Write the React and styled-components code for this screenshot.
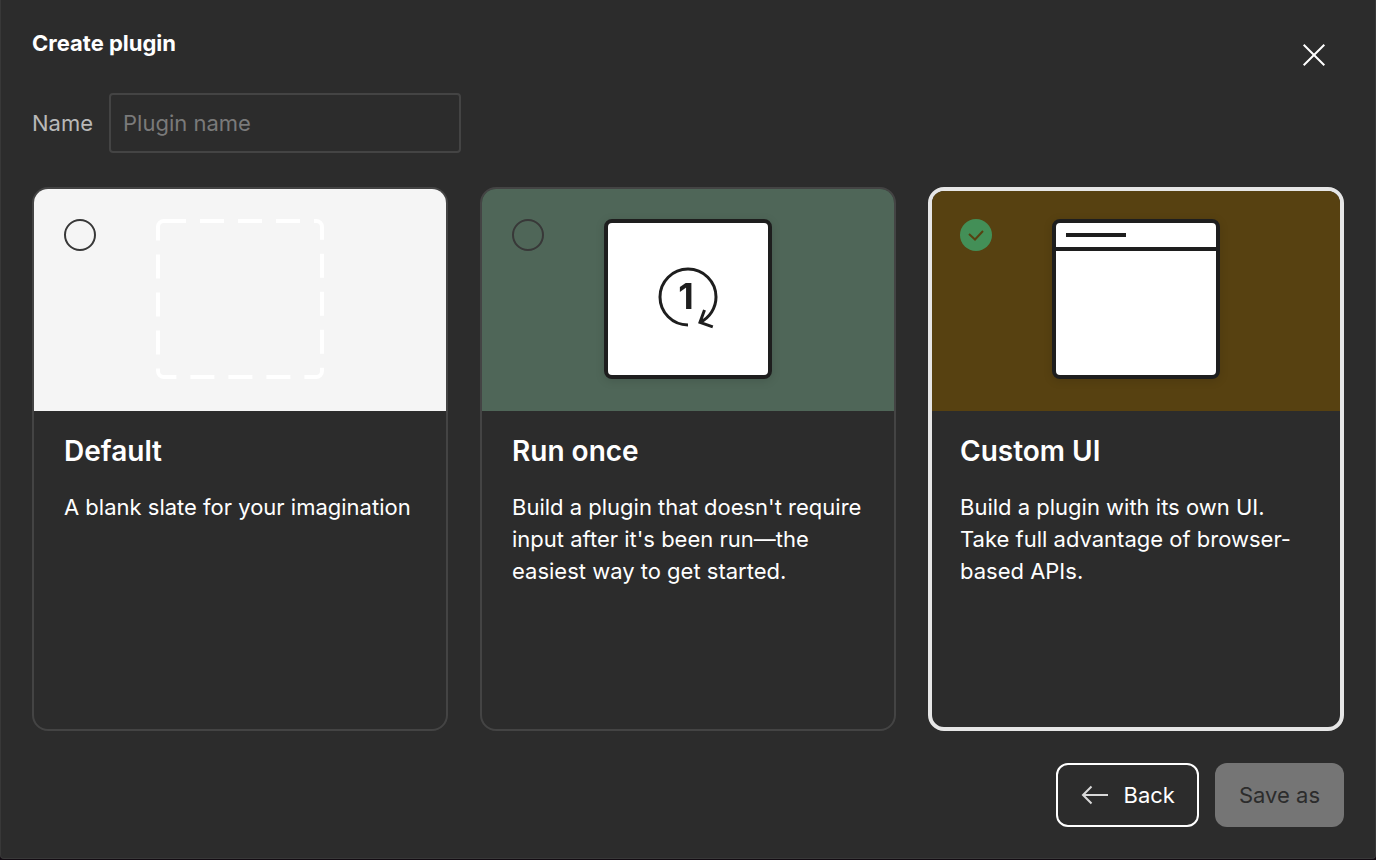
import React, { useState } from "react";
import styled, { createGlobalStyle } from "styled-components";

const GlobalStyle = createGlobalStyle`
  * { box-sizing: border-box; }
  html { background: #120b12; }
  body {
    margin: 0;
    color: #ffffff;
    font-family: Inter, "Liberation Sans", sans-serif;
    font-size: 22px;
    line-height: 32px;
    -webkit-font-smoothing: antialiased;
  }
  h1, h2, p { margin: 0; }
  button, input { font: inherit; }
`;

const Dialog = styled.form`
  display: flex;
  flex-direction: column;
  min-height: calc(100vh - 1px);
  background: #2c2c2c;
  border: 1px solid #383838;
  border-top: 0;
  border-radius: 0 0 4px 4px;
  padding: 23px 31px 31px;
`;

const Header = styled.header`
  display: flex;
  justify-content: space-between;
  align-items: flex-start;
`;

const Title = styled.h1`
  font-size: 22px;
  font-weight: 700;
  line-height: 40px;
`;

const CloseButton = styled.button`
  display: grid;
  place-items: center;
  width: 60px;
  height: 64px;
  padding: 0;
  border: 0;
  background: none;
  color: #ffffff;
  cursor: pointer;
`;

const NameRow = styled.div`
  display: flex;
  align-items: center;
  gap: 16px;
  margin-top: 6px;
`;

const NameLabel = styled.label`
  color: #b9b9b9;
`;

const NameInput = styled.input`
  width: 352px;
  height: 60px;
  padding: 0 12px;
  border: 2px solid #444444;
  border-radius: 4px;
  background: transparent;
  color: #ffffff;
  outline: none;
  &::placeholder { color: #7a7a7a; opacity: 1; }
`;

const Cards = styled.div`
  display: grid;
  grid-template-columns: repeat(3, minmax(0, 1fr));
  gap: 32px;
  flex: 1;
  margin: 34px 0 32px;
`;

const Card = styled.label`
  --edge: ${(p) => (p.$selected ? "4px" : "2px")};
  display: flex;
  flex-direction: column;
  border: var(--edge) solid ${(p) => (p.$selected ? "#e6e6e6" : "#444444")};
  border-radius: 16px;
  overflow: hidden;
  cursor: pointer;
`;

const Preview = styled.div`
  display: grid;
  grid-template-columns: 1fr auto 1fr;
  align-items: start;
  height: calc(224px - var(--edge));
  padding: calc(32px - var(--edge));
  padding-bottom: 0;
  background: ${(p) => p.$color};
`;

const RadioWrap = styled.span`
  display: grid;
  width: 32px;
  height: 32px;
  & > * { grid-area: 1 / 1; }
  & > svg { pointer-events: none; }
`;

const Radio = styled.input`
  appearance: none;
  width: 32px;
  height: 32px;
  margin: 0;
  border: 2px solid #383838;
  border-radius: 50%;
  cursor: pointer;
  &:checked {
    border: 0;
    background: #438f57;
  }
`;

const CardBody = styled.div`
  display: flex;
  flex-direction: column;
  gap: 24px;
  padding: 24px calc(32px - var(--edge));
`;

const CardTitle = styled.h2`
  font-size: 28px;
  font-weight: 600;
  line-height: 32px;
`;

const Footer = styled.footer`
  display: flex;
  justify-content: flex-end;
  gap: 16px;
`;

const Button = styled.button`
  display: flex;
  align-items: center;
  gap: 12px;
  height: 64px;
  padding: 0 ${(p) => (p.$outline ? "22px" : "24px")};
  border: ${(p) => (p.$outline ? "2px solid #ffffff" : "0")};
  border-radius: 12px;
  background: ${(p) => (p.$outline ? "transparent" : "#757575")};
  color: ${(p) => (p.$outline ? "#ffffff" : "#2c2c2c")};
`;

const Art = styled.svg`
  display: block;
  overflow: visible;
  filter: ${(p) => (p.$shadow ? "drop-shadow(0 2px 4px rgba(0, 0, 0, 0.12))" : "none")};
`;

function BlankArt() {
  return (
    <Art width="168" height="160" viewBox="0 0 168 160" fill="none" aria-hidden="true">
      <path
        d="M8 2H160A6 6 0 0 1 166 8V152A6 6 0 0 1 160 158H8A6 6 0 0 1 2 152V8A6 6 0 0 1 8 2Z"
        stroke="#fff"
        strokeWidth="4"
        strokeDasharray="24 14"
        strokeDashoffset="2"
      />
    </Art>
  );
}

function RunOnceArt() {
  return (
    <Art $shadow width="168" height="160" viewBox="0 0 168 160" fill="none" aria-hidden="true">
      <rect x="2" y="2" width="164" height="156" rx="6" fill="#fff" stroke="#1e1e1e" strokeWidth="4" />
      <path
        d="M84 106A28 28 0 1 1 112 78A28 28 0 0 1 96 103.3M100.5 91L96 103.3L108.8 107.8"
        stroke="#1e1e1e"
        strokeWidth="3"
      />
      <text x="82" y="90" textAnchor="middle" fontSize="36" fontWeight="700" fill="#1e1e1e">1</text>
    </Art>
  );
}

function WindowArt() {
  return (
    <Art $shadow width="168" height="160" viewBox="0 0 168 160" fill="none" aria-hidden="true">
      <rect x="2" y="2" width="164" height="156" rx="6" fill="#fff" stroke="#1e1e1e" strokeWidth="4" />
      <path d="M2 30H166M14 16H74" stroke="#1e1e1e" strokeWidth="4" />
    </Art>
  );
}

const options = [
  {
    id: "default",
    title: "Default",
    text: "A blank slate for your imagination",
    color: "#f5f5f5",
    art: <BlankArt />,
  },
  {
    id: "run-once",
    title: "Run once",
    text: "Build a plugin that doesn't require input after it's been run—the easiest way to get started.",
    color: "#4f6658",
    art: <RunOnceArt />,
  },
  {
    id: "custom-ui",
    title: "Custom UI",
    text: "Build a plugin with its own UI. Take full advantage of browser-based APIs.",
    color: "#574111",
    art: <WindowArt />,
  },
];

export default function App() {
  const [selected, setSelected] = useState("custom-ui");
  const [name, setName] = useState("");
  return (
    <>
      <GlobalStyle />
      <Dialog onSubmit={(e) => e.preventDefault()}>
        <Header>
          <Title>Create plugin</Title>
          <CloseButton type="button" aria-label="Close">
            <svg width="24" height="24" viewBox="0 0 24 24" stroke="currentColor" strokeWidth="2" aria-hidden="true">
              <path d="M1.7 1.7L22.3 22.3M22.3 1.7L1.7 22.3" />
            </svg>
          </CloseButton>
        </Header>
        <NameRow>
          <NameLabel htmlFor="plugin-name">Name</NameLabel>
          <NameInput
            id="plugin-name"
            type="text"
            placeholder="Plugin name"
            value={name}
            onChange={(e) => setName(e.target.value)}
          />
        </NameRow>
        <Cards role="radiogroup" aria-label="Plugin template">
          {options.map((o) => (
            <Card key={o.id} htmlFor={o.id} $selected={selected === o.id}>
              <Preview $color={o.color}>
                <RadioWrap>
                  <Radio
                    id={o.id}
                    type="radio"
                    name="template"
                    checked={selected === o.id}
                    onChange={() => setSelected(o.id)}
                  />
                  {selected === o.id && (
                    <svg width="32" height="32" viewBox="0 0 32 32" fill="none" aria-hidden="true">
                      <path d="M9 15L15 20.5L23 12" stroke={o.color} strokeWidth="2" />
                    </svg>
                  )}
                </RadioWrap>
                {o.art}
              </Preview>
              <CardBody>
                <CardTitle>{o.title}</CardTitle>
                <p>{o.text}</p>
              </CardBody>
            </Card>
          ))}
        </Cards>
        <Footer>
          <Button type="button" $outline>
            <svg width="32" height="32" viewBox="0 0 32 32" fill="none" stroke="#d9d9d9" strokeWidth="2" aria-hidden="true">
              <path d="M28 16H3M11.5 7.5L3 16L11.5 24.5" />
            </svg>
            Back
          </Button>
          <Button type="submit" disabled>Save as</Button>
        </Footer>
      </Dialog>
    </>
  );
}
